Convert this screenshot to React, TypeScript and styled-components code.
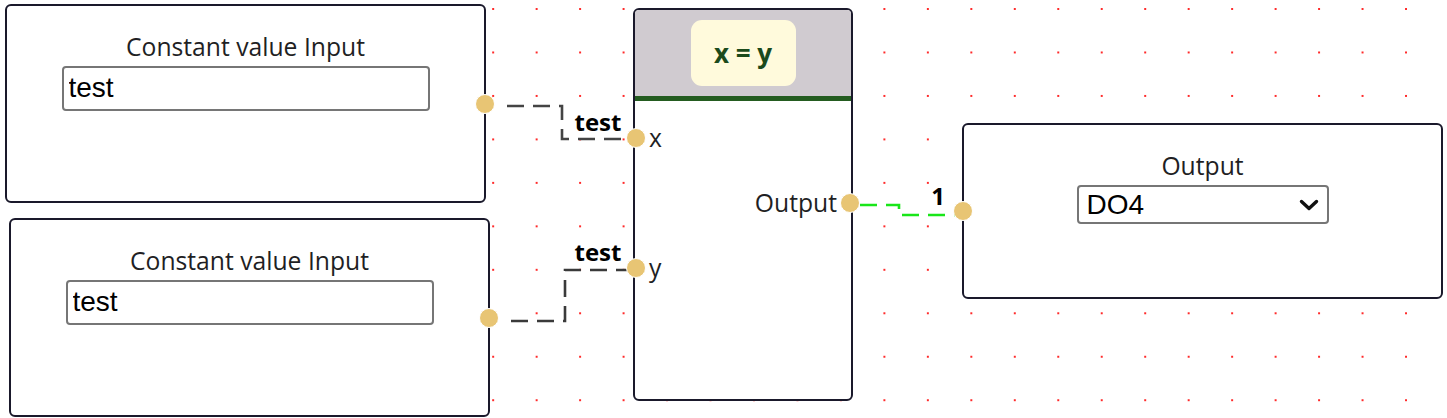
import React from "react";
import styled, { createGlobalStyle } from "styled-components";

const GlobalStyle = createGlobalStyle`
  body {
    margin: 0;
    overflow: hidden;
    background: #ffffff;
  }
`;

type Edge = {
  d: string;
  color: string;
  label: string;
  lx: number;
  ly: number;
};

const edges: Edge[] = [
  { d: "M507 106 H562 V139 H627", color: "#444444", label: "test", lx: 598, ly: 131 },
  { d: "M511 321 H565 V270 H627", color: "#3a3a3a", label: "test", lx: 598, ly: 261 },
  { d: "M860 205 H899 V215 H955", color: "#19e619", label: "1", lx: 938, ly: 205 },
];

function ConstantNode({ x, y }: { x: number; y: number }): React.ReactElement {
  return (
    <Node $x={x} $y={y} $w={481} $h={199}>
      <Title>Constant value Input</Title>
      <TextInput defaultValue="test" />
      <SideHandle $side="right" />
    </Node>
  );
}

function OutputNode(): React.ReactElement {
  return (
    <Node $x={962} $y={123} $w={481} $h={176}>
      <Title>Output</Title>
      <SelectBox>
        <Select defaultValue="DO4">
          <option>DO1</option>
          <option>DO2</option>
          <option>DO3</option>
          <option>DO4</option>
        </Select>
        <svg width="20" height="12" viewBox="0 0 20 12">
          <path
            d="M2.5 2.5 L10 9.5 L17.5 2.5"
            fill="none"
            stroke="#111"
            strokeWidth="3.4"
            strokeLinecap="round"
            strokeLinejoin="round"
          />
        </svg>
      </SelectBox>
      <SideHandle $side="left" />
    </Node>
  );
}

function CompareNode(): React.ReactElement {
  return (
    <Node $x={633} $y={8} $w={220} $h={393}>
      <Header>
        <Formula>x = y</Formula>
      </Header>
      <Ports>
        <PortRow $side="left">
          <PortHandle $side="left" />
          <PortLabel>x</PortLabel>
        </PortRow>
        <PortRow $side="right">
          <PortLabel>Output</PortLabel>
          <PortHandle $side="right" />
        </PortRow>
        <PortRow $side="left">
          <PortHandle $side="left" />
          <PortLabel>y</PortLabel>
        </PortRow>
      </Ports>
    </Node>
  );
}

export default function App(): React.ReactElement {
  return (
    <>
      <GlobalStyle />
      <Canvas>
        <EdgeLayer width="1447" height="418">
          {edges.map((e, i) => (
            <g key={i}>
              <path
                d={e.d}
                fill="none"
                stroke={e.color}
                strokeWidth="2.6"
                strokeDasharray="17 9"
              />
              <EdgeLabel x={e.lx} y={e.ly} textAnchor="middle">
                {e.label}
              </EdgeLabel>
            </g>
          ))}
        </EdgeLayer>
        <ConstantNode x={5} y={4} />
        <ConstantNode x={9} y={218} />
        <CompareNode />
        <OutputNode />
      </Canvas>
    </>
  );
}

const Canvas = styled.div`
  position: relative;
  width: 1447px;
  height: 418px;
  overflow: hidden;
  font-family: "Open Sans", "Noto Sans", sans-serif;
  color: #1f1f24;
  background-color: #ffffff;
  background-image: radial-gradient(circle, #ff2a2a 1.1px, transparent 1.5px);
  background-size: 43.48px 43.48px;
  background-position: 36.76px 30.74px;
`;

const EdgeLayer = styled.svg`
  position: absolute;
  inset: 0;
`;

const EdgeLabel = styled.text`
  font-family: "Open Sans", "Noto Sans", sans-serif;
  font-weight: 700;
  font-size: 24px;
  fill: #000;
`;

const Node = styled.div<{ $x: number; $y: number; $w: number; $h: number }>`
  position: absolute;
  left: ${(p) => p.$x}px;
  top: ${(p) => p.$y}px;
  width: ${(p) => p.$w}px;
  height: ${(p) => p.$h}px;
  box-sizing: border-box;
  border: 2px solid #1a192b;
  border-radius: 6px;
  background: #ffffff;
  display: flex;
  flex-direction: column;
  align-items: center;
  padding-top: 25px;
`;

const Title = styled.div`
  font-size: 24.7px;
  line-height: 32px;
  margin-bottom: 3px;
`;

const TextInput = styled.input`
  box-sizing: border-box;
  width: 368px;
  height: 45px;
  border: 2px solid #767676;
  border-radius: 4px;
  padding: 0 5px 2px;
  font-family: "Liberation Sans", Arial, sans-serif;
  font-size: 28px;
  color: #000;
  outline: none;
`;

const SelectBox = styled.div`
  box-sizing: border-box;
  width: 252px;
  height: 39px;
  border: 2px solid #767676;
  border-radius: 4px;
  display: flex;
  align-items: center;
  padding-right: 8px;
`;

const Select = styled.select`
  appearance: none;
  flex: 1;
  height: 100%;
  border: none;
  background: transparent;
  padding: 0 0 0 8px;
  font-family: "Liberation Sans", Arial, sans-serif;
  font-size: 28px;
  color: #000;
  outline: none;
`;

const SideHandle = styled.span<{ $side: "left" | "right" }>`
  position: absolute;
  top: 50%;
  ${(p) => (p.$side === "right" ? "right: -11px;" : "left: -11px;")}
  width: 18px;
  height: 18px;
  margin-top: -10px;
  border-radius: 50%;
  background: #e8c574;
  border: 1px solid #fff;
`;

const Header = styled.div`
  align-self: stretch;
  margin-top: -25px;
  height: 86px;
  background: #d0cbd0;
  border-bottom: 5px solid #245c20;
  border-radius: 4px 4px 0 0;
  display: flex;
  align-items: center;
  justify-content: center;
`;

const Formula = styled.div`
  width: 105px;
  height: 66px;
  border-radius: 11px;
  background: #fffadc;
  display: flex;
  align-items: center;
  justify-content: center;
  font-weight: 700;
  font-size: 26px;
  color: #1b4a1b;
  white-space: pre;
`;

const Ports = styled.div`
  align-self: stretch;
  display: flex;
  flex-direction: column;
  gap: 33px;
  padding-top: 21px;
`;

const PortRow = styled.div<{ $side: "left" | "right" }>`
  height: 32px;
  display: flex;
  align-items: center;
  gap: 3px;
  justify-content: ${(p) => (p.$side === "left" ? "flex-start" : "flex-end")};
`;

const PortHandle = styled.span<{ $side: "left" | "right" }>`
  width: 20px;
  height: 20px;
  box-sizing: border-box;
  border-radius: 50%;
  background: #e8c574;
  border: 1px solid #fff;
  ${(p) => (p.$side === "left" ? "margin-left: -9px;" : "margin-right: -9px;")}
`;

const PortLabel = styled.span`
  font-size: 24.7px;
  line-height: 32px;
`;
